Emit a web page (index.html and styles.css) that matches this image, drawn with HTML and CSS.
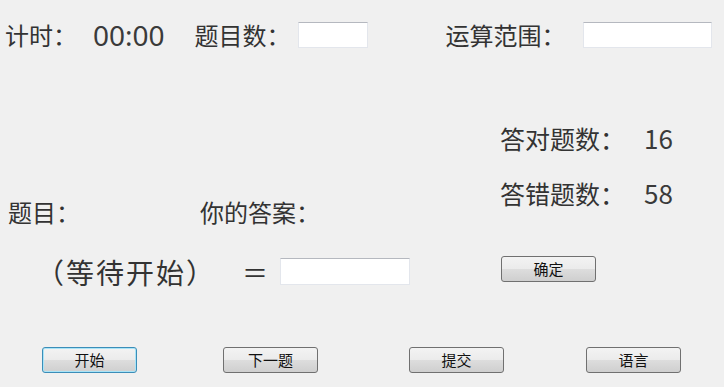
FILE: index.html
```html
<!DOCTYPE html>
<html lang="zh-CN">
<head>
<meta charset="utf-8">
<title>四则运算</title>
<link rel="stylesheet" href="styles.css">
</head>
<body>
<div class="form">
  <div class="top">
    <span class="lbl lbl-timer">计时：</span>
    <span class="timer">00:00</span>
    <span class="lbl lbl-count">题目数：</span>
    <span class="textbox tb-count"></span>
    <span class="lbl lbl-range">运算范围：</span>
    <span class="textbox tb-range"></span>
  </div>
  <div class="middle">
    <div class="left">
      <div class="qrow">
        <span class="lbl lbl-q">题目：</span>
        <span class="lbl lbl-ans">你的答案：</span>
      </div>
      <div class="exprow">
        <span class="expr">（等待开始）</span>
        <span class="eq">＝</span>
        <span class="textbox tb-ans"></span>
      </div>
    </div>
    <div class="right">
      <div class="stat"><span class="stat-lbl">答对题数：</span><span class="stat-num">16</span></div>
      <div class="stat stat2"><span class="stat-lbl">答错题数：</span><span class="stat-num">58</span></div>
      <button class="btn btn-ok">确定</button>
    </div>
  </div>
  <div class="bottom">
    <button class="btn btn-focus b1">开始</button>
    <button class="btn b2">下一题</button>
    <button class="btn b3">提交</button>
    <button class="btn b4">语言</button>
  </div>
</div>
</body>
</html>
```
FILE: styles.css
```css
html, body {
  margin: 0;
  padding: 0;
  background: #f0f0f0;
}
body {
  width: 724px;
  height: 387px;
  overflow: hidden;
  font-family: "Noto Sans CJK SC", "Noto Sans", sans-serif;
  color: #333333;
}
.form {
  width: 724px;
  height: 387px;
}
.top {
  height: 70px;
  display: flex;
  align-items: center;
}
.lbl {
  font-size: 24px;
  line-height: 30px;
  white-space: nowrap;
}
.lbl-timer { margin-left: 5px; }
.timer {
  font-family: "Noto Sans", sans-serif;
  font-size: 28px;
  line-height: 30px;
  margin-left: 16px;
  color: #3a3a3a;
}
.lbl-count { margin-left: 30px; }
.textbox {
  display: inline-block;
  height: 26px;
  box-sizing: border-box;
  background: #ffffff;
  border: 1px solid #e3e6ec;
  border-top-color: #b5b8bf;
}
.tb-count { width: 70px; margin-left: 7px; }
.lbl-range { margin-left: 78px; }
.tb-range { width: 129px; margin-left: 17px; }

.middle {
  height: 277px;
  display: flex;
}
.left {
  width: 500px;
  padding-top: 127px;
}
.qrow {
  display: flex;
  height: 30px;
  align-items: center;
}
.lbl-q { margin-left: 8px; width: 192px; }
.exprow {
  margin-top: 31px;
  height: 27px;
  display: flex;
  align-items: center;
}
.expr {
  font-size: 28px;
  letter-spacing: 2px;
  line-height: 30px;
  margin-left: 36px;
  white-space: nowrap;
}
.eq {
  font-size: 26px;
  line-height: 30px;
  margin-left: 26px;
}
.tb-ans { width: 130px; height: 27px; margin-left: 12px; }

.right {
  padding-top: 53px;
  display: flex;
  flex-direction: column;
  align-items: flex-start;
}
.stat {
  display: flex;
  align-items: center;
  height: 30px;
  white-space: nowrap;
}
.stat2 { margin-top: 25px; }
.stat-lbl { font-size: 25px; line-height: 30px; width: 144px; }
.stat-num { font-size: 26px; line-height: 30px; color: #3a3a3a; }

.btn {
  width: 95px;
  height: 26px;
  padding: 0;
  box-sizing: border-box;
  border: 1px solid #707070;
  border-radius: 3px;
  background: linear-gradient(#f3f3f3 0%, #ebebeb 50%, #dddddd 51%, #cfcfcf 100%);
  font-family: "Noto Sans CJK SC", sans-serif;
  font-size: 15px;
  line-height: 24px;
  color: #111111;
}
.btn-ok { margin-top: 48px; margin-left: 1px; }
.btn-focus {
  border-color: #3b8db8;
  box-shadow: inset 0 0 0 1px #a9e4f7;
}
.bottom {
  display: flex;
  align-items: center;
}
.b1 { margin-left: 42px; }
.b2 { margin-left: 86px; }
.b3 { margin-left: 91px; }
.b4 { margin-left: 82px; }
```
